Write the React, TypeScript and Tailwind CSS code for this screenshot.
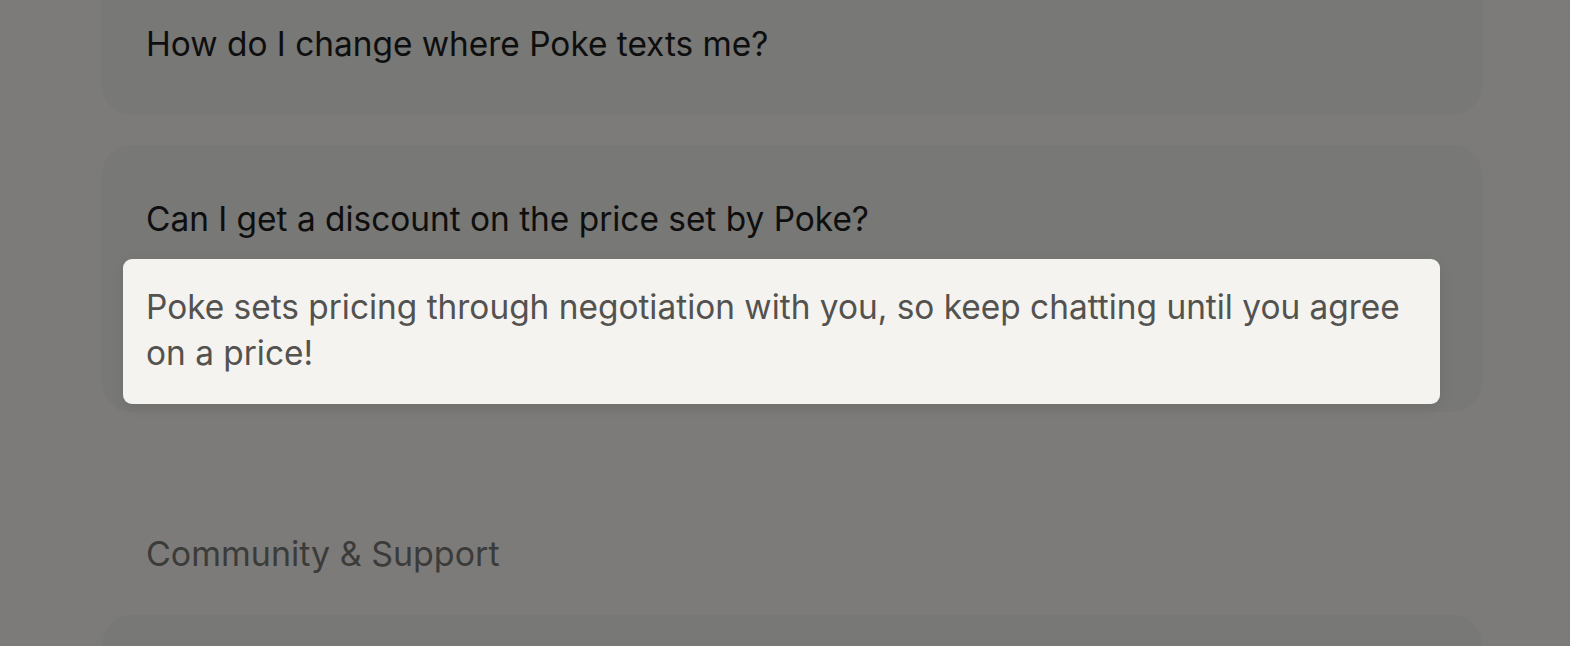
export default function App() {
  const font = { fontFamily: "Inter, 'Noto Sans', sans-serif" };
  return (
    <div className="h-[646px] w-full overflow-hidden bg-[#7c7b79]" style={font}>
      <div className="ml-[102px] w-[1380px] -mt-[28px] flex flex-col">
        {/* FAQ item, collapsed */}
        <div className="rounded-[30px] bg-[#787876] px-[44px] pt-[52px] pb-[51px]">
          <h3 className="text-[33.4px] leading-[40px] text-[#0e0e0e]">
            How do I change where Poke texts me?
          </h3>
        </div>

        {/* FAQ item, expanded */}
        <div className="mt-[30px] rounded-[30px] bg-[#787876] pl-[21px] pr-[42px] pt-[54px] pb-[8px]">
          <h3 className="px-[23px] text-[33.4px] leading-[40px] text-[#0e0e0e]">
            Can I get a discount on the price set by Poke?
          </h3>
          <div className="mt-[20px] rounded-[9px] bg-[#f4f3ef] px-[23px] pt-[25px] pb-[28px] shadow-[0_4px_14px_rgba(0,0,0,0.08)]">
            <p className="text-[33.4px] leading-[46px] text-[#53524f]">
              Poke sets pricing through negotiation with you, so keep chatting until you agree on a price!
            </p>
          </div>
        </div>

        {/* Section heading */}
        <h2 className="mt-[122px] px-[44px] text-[34px] leading-[40px] text-[#3b3b3a]">
          Community &amp; Support
        </h2>

        <div className="mt-[41px] h-[120px] rounded-[30px] bg-[#787876]" />
      </div>
    </div>
  );
}
